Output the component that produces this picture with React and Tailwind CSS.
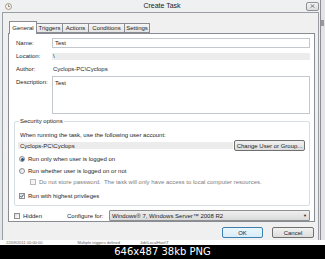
import React from 'react';

const tabs = [
  { label: 'General', active: true, w: 'w-[28px]' },
  { label: 'Triggers', w: 'w-[26px]' },
  { label: 'Actions', w: 'w-[26px]' },
  { label: 'Conditions', w: 'w-[36px]' },
  { label: 'Settings', w: 'w-[25px]' },
];

const Radio = ({ checked }) => (
  <span className="w-[6px] h-[6px] shrink-0 rounded-full border border-[#8e8f8f] bg-gradient-to-br from-[#dcdcdc] to-white flex items-center justify-center">
    {checked && <span className="w-[3px] h-[3px] rounded-full bg-[#1d4f8c]" />}
  </span>
);

const Check = ({ checked, disabled }) => (
  <span
    className={
      disabled
        ? 'w-[6px] h-[6px] shrink-0 border border-[#b9b9b9] bg-[#f4f4f4]'
        : 'w-[6px] h-[6px] shrink-0 border border-[#8e8f8f] bg-gradient-to-br from-[#dcdcdc] to-white flex items-center justify-center'
    }
  >
    {checked && (
      <svg width="4" height="4" viewBox="0 0 4 4">
        <path d="M0.4 2.1 L1.5 3.3 L3.6 0.5" fill="none" stroke="#1b3f6e" strokeWidth="0.9" />
      </svg>
    )}
  </span>
);

const Field = ({ label, children }) => (
  <div className="flex items-center">
    <span className="w-[36px] shrink-0">{label}</span>
    {children}
  </div>
);

export default function App() {
  return (
    <div className="w-[325px] h-[259px] overflow-hidden flex flex-col bg-black font-['Liberation_Sans',Arial,sans-serif] text-[6px] leading-[8px] text-[#1e1e1e]">
      <div className="h-[245px] flex flex-col bg-white">
        <div className="h-[240px] flex">
          {/* dialog */}
          <div className="w-[321px] flex flex-col bg-gradient-to-b from-[#eef0f2] to-[#e2e5e8] border-r border-[#8a8d92]">
            {/* title bar */}
            <div className="h-[12px] flex items-center">
              <svg className="ml-[5px] shrink-0" width="7" height="7" viewBox="0 0 7 7">
                <circle cx="3.5" cy="3.5" r="3" fill="#f4f2ea" stroke="#8c7a52" strokeWidth="0.7" />
                <path d="M3.5 1.6 V3.6 H5" fill="none" stroke="#4a4a4a" strokeWidth="0.6" />
              </svg>
              <span className="flex-1 text-center pl-[6px] text-[7px] leading-[12px] text-[#1a1a1a]">Create Task</span>
              <div className="w-[13px] h-[9px] mr-[1px] rounded-[2px] border border-[#8e9297] bg-gradient-to-b from-[#f4f4f4] to-[#dcdcdc] flex items-center justify-center">
                <svg width="5" height="4" viewBox="0 0 5 4">
                  <path d="M0.5 0.3 L4.5 3.7 M4.5 0.3 L0.5 3.7" stroke="#5a5a5a" strokeWidth="0.7" />
                </svg>
              </div>
            </div>

            {/* client area */}
            <div className="flex-1 ml-[2px] mr-[1px] border border-b-0 border-[#9a9da2] bg-[#f0f0f0] pl-[5px] pr-[3px] pt-[7px] flex flex-col">
              {/* tabs */}
              <div className="flex items-end ml-[1px] h-[13px]">
                {tabs.map((t) =>
                  t.active ? (
                    <div
                      key={t.label}
                      className={`${t.w} h-[13px] -mb-[1px] relative z-10 border border-b-0 border-[#898c95] bg-white flex items-center justify-center leading-[11px]`}
                    >
                      {t.label}
                    </div>
                  ) : (
                    <div
                      key={t.label}
                      className={`${t.w} h-[10px] border border-l-0 border-[#898c95] bg-gradient-to-b from-[#f6f6f6] to-[#e4e4e4] flex items-center justify-center`}
                    >
                      {t.label}
                    </div>
                  )
                )}
              </div>

              {/* tab panel */}
              <div className="h-[189px] border border-[#898c95] bg-white pt-[4px] pl-[7px] pr-[4px] flex flex-col">
                <Field label="Name:">
                  <div className="flex-1 h-[10px] border border-[#c3c8cf] px-[2px] flex items-center">Test</div>
                </Field>
                <div className="mt-[4px]">
                  <Field label="Location:">
                    <div className="flex-1 h-[7px] bg-[#ececec] px-[1px] flex items-center">\</div>
                  </Field>
                </div>
                <div className="mt-[4px] h-[10px] flex items-center">
                  <span className="w-[36px] shrink-0">Author:</span>
                  <span className="pl-[1px]">Cyclops-PC\Cyclops</span>
                </div>
                <div className="mt-[2px] flex items-start">
                  <span className="w-[36px] shrink-0 pt-[2px]">Description:</span>
                  <div className="flex-1 h-[38px] border border-[#c3c8cf] px-[2px] pt-[2px]">Test</div>
                </div>

                {/* security options */}
                <fieldset className="mt-[3px] -ml-[2px] border border-[#d5dfe5] rounded-[2px] pl-[3px] pr-[4px] pb-[5px]">
                  <legend className="ml-[1px] px-[1px] leading-[8px]">Security options</legend>
                  <div className="mt-[6px] h-[8px] pl-[2px] flex items-center">
                    When running the task, use the following user account:
                  </div>
                  <div className="mt-[1px] h-[11px] flex items-center gap-[1px]">
                    <div className="flex-1 h-[7px] bg-[#ececec] px-[2px] flex items-center">Cyclops-PC\Cyclops</div>
                    <div className="w-[71px] h-[11px] rounded-[2px] border border-[#707070] bg-gradient-to-b from-[#f2f2f2] to-[#dcdcdc] flex items-center justify-center">
                      Change User or Group...
                    </div>
                  </div>
                  <div className="mt-[4px] h-[8px] pl-[1px] flex items-center gap-[3px]">
                    <Radio checked />
                    <span>Run only when user is logged on</span>
                  </div>
                  <div className="mt-[4px] h-[8px] pl-[1px] flex items-center gap-[3px]">
                    <Radio />
                    <span>Run whether user is logged on or not</span>
                  </div>
                  <div className="mt-[3px] h-[8px] pl-[12px] flex items-center gap-[3px] text-[#7d7d7d]">
                    <Check disabled />
                    <span>Do not store password.&nbsp; The task will only have access to local computer resources.</span>
                  </div>
                  <div className="mt-[6px] h-[8px] pl-[1px] flex items-center gap-[3px]">
                    <Check checked />
                    <span>Run with highest privileges</span>
                  </div>
                </fieldset>

                <div className="mt-[4px] h-[11px] flex items-center">
                  <span className="ml-[-2px] flex items-center gap-[3px] w-[53px]">
                    <Check />
                    <span>Hidden</span>
                  </span>
                  <span className="w-[42px]">Configure for:</span>
                  <div className="flex-1 h-[11px] rounded-[1px] border border-[#8e8f8f] bg-gradient-to-b from-[#f0f0f0] to-[#dadada] pl-[2px] pr-[2px] flex items-center justify-between">
                    <span>Windows® 7, Windows Server™ 2008 R2</span>
                    <span className="text-[4px] leading-[4px]">▼</span>
                  </div>
                </div>
              </div>

              {/* buttons */}
              <div className="mt-[5px] h-[11px] flex justify-end gap-[9px] mr-[1px]">
                <div className="w-[41px] h-[11px] rounded-[2px] border border-[#3c7fb1] bg-gradient-to-b from-[#eaf6fd] to-[#d9ecf7] flex items-center justify-center">OK</div>
                <div className="w-[42px] h-[11px] rounded-[2px] border border-[#707070] bg-gradient-to-b from-[#f2f2f2] to-[#dcdcdc] flex items-center justify-center">Cancel</div>
              </div>
            </div>
          </div>

          {/* background window edge */}
          <div className="flex-1 bg-[#e4e4e4] flex flex-col">
            <div className="h-[20px]" />
            <div className="h-[6px] w-[3px] bg-[#9a9a9a]" />
            <div className="flex-1" />
          </div>
        </div>
        <div className="h-[5px] bg-white text-[4px] leading-[5px] text-[#666] flex gap-[20px] pl-[6px]">
          <span>22/09/2011 00:00:00</span>
          <span className="ml-[15px]">Multiple triggers defined</span>
          <span>Job\LocalHost\T</span>
        </div>
      </div>

      <div className="h-[14px] flex items-center justify-center text-white font-['DejaVu_Sans',sans-serif] text-[10px] leading-[14px]">
        646x487 38kb PNG
      </div>
    </div>
  );
}
